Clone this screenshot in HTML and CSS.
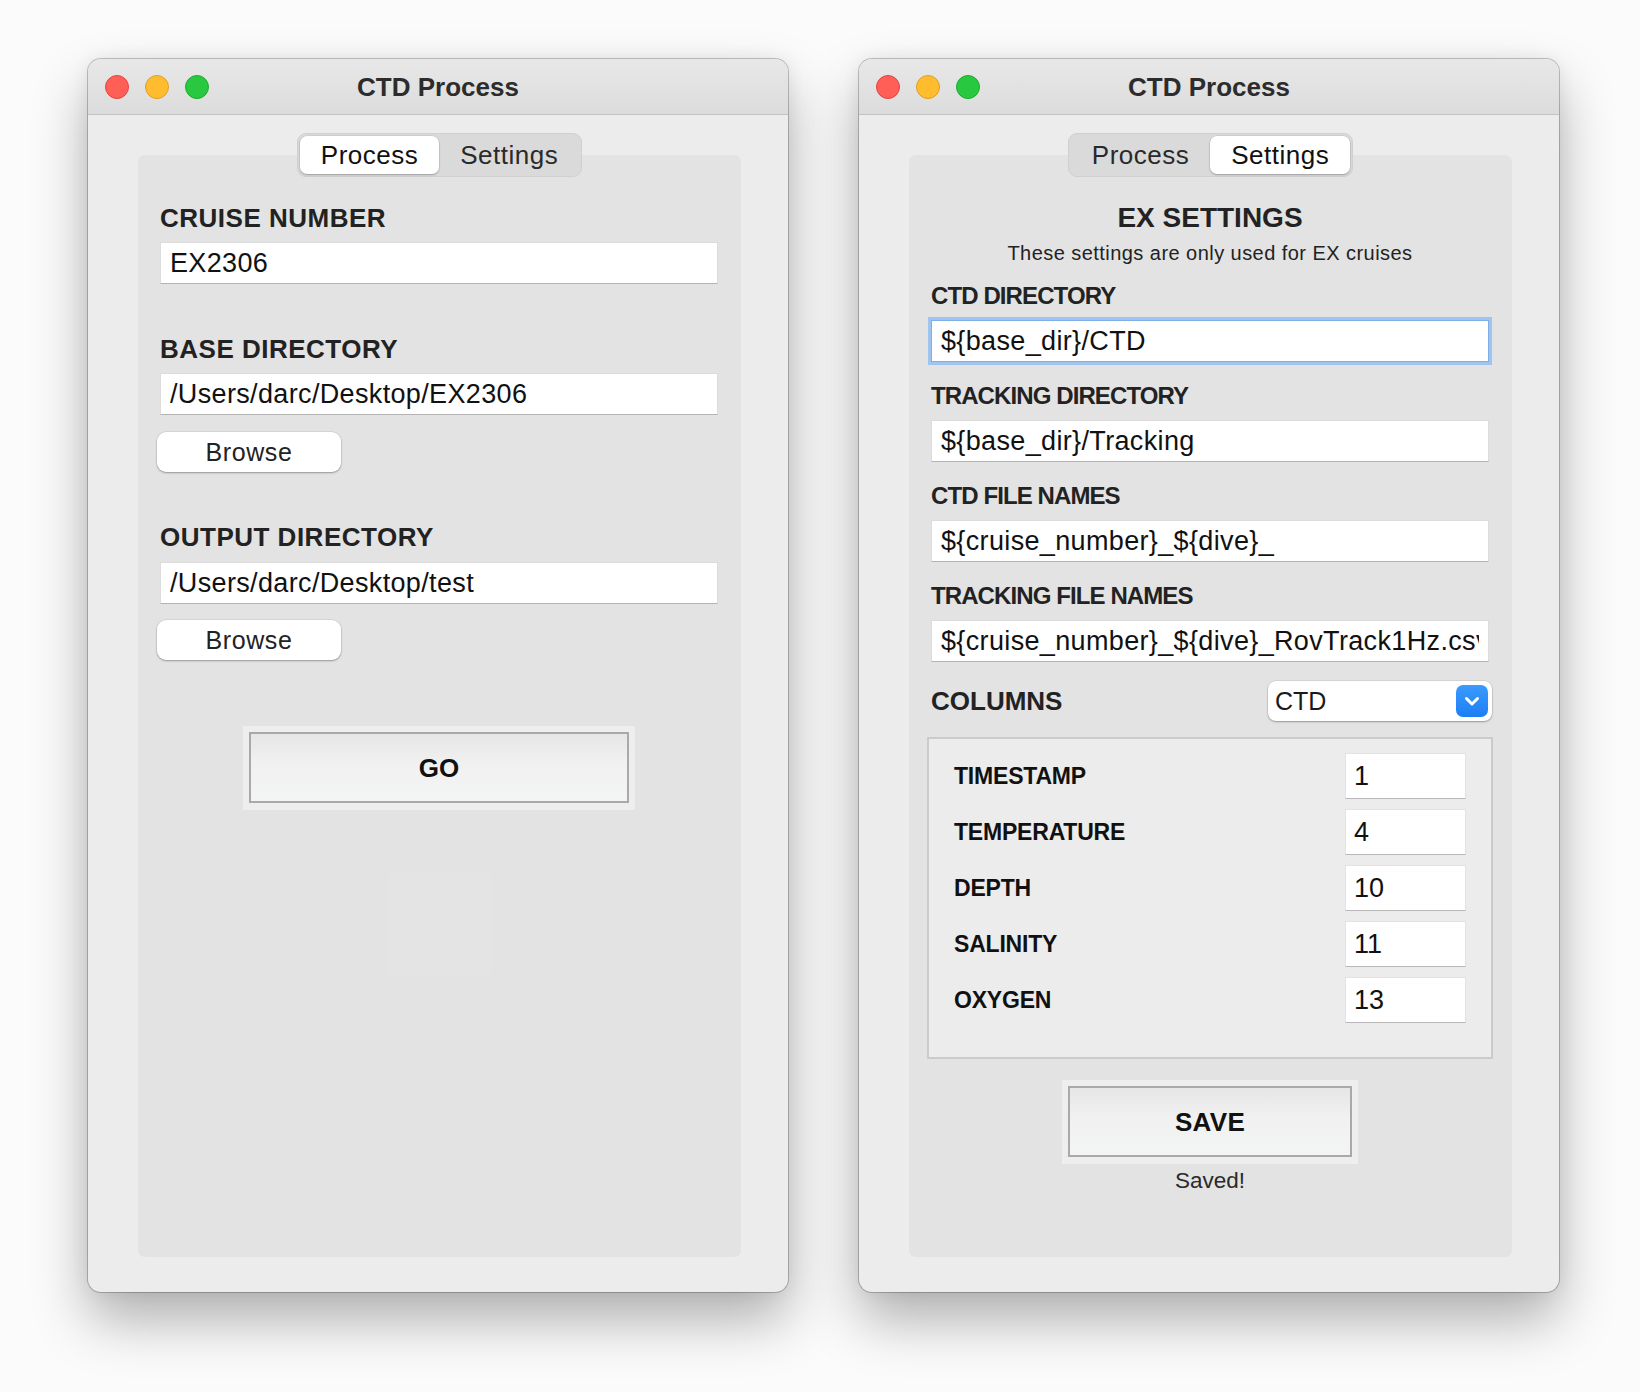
FILE: index.html
```html
<!DOCTYPE html>
<html>
<head>
<meta charset="utf-8">
<title>CTD Process</title>
<link rel="stylesheet" href="styles.css">
</head>
<body>
<div class="desktop">
  <div class="window">
    <div class="titlebar">
      <div class="lights">
        <span class="light red"></span>
        <span class="light yellow"></span>
        <span class="light green"></span>
      </div>
      <div class="title">CTD Process</div>
      <div></div>
    </div>
    <div class="win-body">
      <div class="segmented">
        <div class="seg active">Process</div>
        <div class="seg">Settings</div>
      </div>
      <div class="panel panel-process">
        <div class="label-lg">CRUISE NUMBER</div>
        <input class="field field-lg" type="text" value="EX2306">
        <div class="label-lg gap-top">BASE DIRECTORY</div>
        <input class="field field-lg" type="text" value="/Users/darc/Desktop/EX2306">
        <button class="browse">Browse</button>
        <div class="label-lg gap-top">OUTPUT DIRECTORY</div>
        <input class="field field-lg field-3" type="text" value="/Users/darc/Desktop/test">
        <button class="browse browse-2">Browse</button>
        <div class="action-frame go-frame"><div class="action-btn go-btn">GO</div></div>
        <div class="ghost"></div>
      </div>
    </div>
  </div>

  <div class="window">
    <div class="titlebar">
      <div class="lights">
        <span class="light red"></span>
        <span class="light yellow"></span>
        <span class="light green"></span>
      </div>
      <div class="title">CTD Process</div>
      <div></div>
    </div>
    <div class="win-body">
      <div class="segmented">
        <div class="seg">Process</div>
        <div class="seg active">Settings</div>
      </div>
      <div class="panel panel-settings">
        <div class="heading">EX SETTINGS</div>
        <div class="subtitle">These settings are only used for EX cruises</div>
        <div class="label-sm first">CTD DIRECTORY</div>
        <input class="field focused" type="text" value="${base_dir}/CTD">
        <div class="label-sm">TRACKING DIRECTORY</div>
        <input class="field" type="text" value="${base_dir}/Tracking">
        <div class="label-sm">CTD FILE NAMES</div>
        <input class="field" type="text" value="${cruise_number}_${dive}_">
        <div class="label-sm">TRACKING FILE NAMES</div>
        <input class="field" type="text" value="${cruise_number}_${dive}_RovTrack1Hz.csv">
        <div class="columns-row">
          <div class="columns-label">COLUMNS</div>
          <div class="select">
            <span class="select-text">CTD</span>
            <span class="select-btn">
              <svg width="32" height="32" viewBox="0 0 32 32"><path d="M10.5 13.5 L16 19 L21.5 13.5" fill="none" stroke="#fff" stroke-width="3" stroke-linecap="round" stroke-linejoin="round"/></svg>
            </span>
          </div>
        </div>
        <div class="col-box">
          <div class="col-row"><span class="col-label">TIMESTAMP</span><input class="col-input" type="text" value="1"></div>
          <div class="col-row"><span class="col-label">TEMPERATURE</span><input class="col-input" type="text" value="4"></div>
          <div class="col-row"><span class="col-label">DEPTH</span><input class="col-input" type="text" value="10"></div>
          <div class="col-row"><span class="col-label">SALINITY</span><input class="col-input" type="text" value="11"></div>
          <div class="col-row"><span class="col-label">OXYGEN</span><input class="col-input" type="text" value="13"></div>
        </div>
        <div class="action-frame save-frame"><div class="action-btn save-btn">SAVE</div></div>
        <div class="saved">Saved!</div>
      </div>
    </div>
  </div>
</div>
</body>
</html>
```

FILE: styles.css
```css
* { box-sizing: border-box; }

html, body {
  margin: 0;
  padding: 0;
  background: #fbfbfb;
  font-family: "Liberation Sans", Arial, sans-serif;
  color: #222;
}

.desktop {
  display: flex;
  gap: 71px;
  padding: 59px 0 0 88px;
  height: 1392px;
}

.window {
  width: 700px;
  height: 1233px;
  background: #ececec;
  border-radius: 13px;
  display: flex;
  flex-direction: column;
  overflow: hidden;
  box-shadow: 0 0 0 1px rgba(0, 0, 0, 0.22),
              0 28px 55px rgba(0, 0, 0, 0.30),
              0 0 18px rgba(0, 0, 0, 0.07);
}

.titlebar {
  height: 56px;
  flex: none;
  display: grid;
  grid-template-columns: 1fr auto 1fr;
  align-items: center;
  background: linear-gradient(#e8e8e8, #dcdcdc);
  border-bottom: 1px solid #c3c3c3;
}

.lights {
  display: flex;
  gap: 16px;
  padding-left: 17px;
}

.light {
  width: 24px;
  height: 24px;
  border-radius: 50%;
  display: block;
}
.light.red { background: #ff5f57; border: 1px solid #e2463f; }
.light.yellow { background: #febc2e; border: 1px solid #dfa023; }
.light.green { background: #28c840; border: 1px solid #1dad2b; }

.title {
  font-weight: bold;
  font-size: 26px;
  color: #2c2c2c;
  line-height: 30px;
}

.win-body {
  flex: 1;
  display: flex;
  flex-direction: column;
  align-items: center;
  padding: 18px 47px 35px 50px;
}

.segmented {
  position: relative;
  z-index: 1;
  display: flex;
  height: 44px;
  padding: 2px;
  background: #dadada;
  border: 1px solid #d0d0d0;
  border-radius: 9px;
}

.seg {
  height: 38px;
  padding: 0 21px;
  font-size: 26px;
  letter-spacing: 0.5px;
  line-height: 38px;
  color: #2a2a2a;
  border-radius: 7px;
}

.seg.active {
  background: #fff;
  color: #111;
  box-shadow: 0 1px 2px rgba(0, 0, 0, 0.25), 0 0 0 0.5px rgba(0, 0, 0, 0.08);
}

.panel {
  align-self: stretch;
  flex: 1;
  margin-top: -22px;
  background: #e3e3e3;
  border-radius: 7px;
  display: flex;
  flex-direction: column;
  padding-left: 22px;
  padding-right: 23px;
}

.panel-process { padding-top: 48px; }
.panel-settings { padding-top: 47px; }

.label-lg {
  font-weight: bold;
  font-size: 26px;
  letter-spacing: 0.5px;
  line-height: 30px;
  color: #222;
}

.label-lg.gap-top { margin-top: 50px; }

.field {
  display: block;
  width: 100%;
  height: 42px;
  margin: 10px 0 0 0;
  padding: 0 9px;
  border: 1px solid #dcdcdc;
  border-bottom-color: #b4b4b4;
  border-radius: 0;
  background: #fff;
  font-family: "Liberation Sans", Arial, sans-serif;
  font-size: 27px;
  letter-spacing: 0.35px;
  color: #111;
  outline: none;
}

.field-lg { margin-top: 9px; }
.field-3 { margin-top: 10px; }

.field.focused {
  border-color: #7eaee6;
  box-shadow: 0 0 0 3px #9fc4ef;
}

.browse {
  align-self: flex-start;
  width: 184px;
  height: 40px;
  margin: 17px 0 0 -3px;
  background: #fff;
  border: none;
  border-radius: 9px;
  box-shadow: 0 1px 2px rgba(0, 0, 0, 0.3), 0 0 0 0.5px rgba(0, 0, 0, 0.1);
  font-family: "Liberation Sans", Arial, sans-serif;
  font-size: 25px;
  letter-spacing: 0.6px;
  color: #222;
  padding: 0;
}

.browse-2 { margin-top: 16px; }

.action-frame {
  align-self: center;
  padding: 6px 6px 7px 6px;
  background: #eeeeee;
}

.go-frame { margin-top: 66px; }

.action-btn {
  display: flex;
  align-items: center;
  justify-content: center;
  padding-top: 2px;
  border: 2px solid #a9a9a9;
  background: linear-gradient(#e6e6e6, #f1f1f1 45%, #f3f4f4);
  font-weight: bold;
  font-size: 26px;
  color: #111;
}

.go-btn { width: 380px; height: 71px; }
.save-btn { width: 284px; height: 71px; letter-spacing: 0.3px; }

.ghost {
  align-self: center;
  width: 100px;
  height: 100px;
  margin-top: 65px;
  background: #e4e4e4;
  box-shadow: 0 0 5px 1px rgba(232, 232, 232, 0.5);
  border-radius: 3px;
}

/* settings */
.heading {
  align-self: center;
  font-weight: bold;
  font-size: 28px;
  line-height: 32px;
  color: #222;
}

.subtitle {
  align-self: center;
  margin-top: 7px;
  font-size: 20px;
  letter-spacing: 0.45px;
  line-height: 24px;
  color: #222;
}

.label-sm {
  margin-top: 20px;
  font-weight: bold;
  font-size: 24px;
  letter-spacing: -0.9px;
  line-height: 28px;
  color: #222;
}

.label-sm.first { margin-top: 17px; }

.columns-row {
  margin-top: 19px;
  margin-right: -3px;
  height: 40px;
  display: flex;
  align-items: center;
  justify-content: space-between;
}

.columns-label {
  font-weight: bold;
  font-size: 26px;
  color: #222;
}

.select {
  width: 224px;
  height: 40px;
  background: #fff;
  border-radius: 8px;
  box-shadow: 0 1px 2px rgba(0, 0, 0, 0.3), 0 0 0 0.5px rgba(0, 0, 0, 0.1);
  display: flex;
  align-items: center;
  justify-content: space-between;
  padding: 0 4px 0 7px;
}

.select-text {
  font-size: 25px;
  color: #1a1a1a;
}

.select-btn {
  width: 32px;
  height: 32px;
  border-radius: 7px;
  background: linear-gradient(#3c9bff, #1b7ef6);
  display: flex;
}

.col-box {
  margin: 16px -4px 0 -4px;
  border: 2px solid #cbcbcb;
  background: #ececec;
  padding: 14px 25px 34px 25px;
  display: flex;
  flex-direction: column;
  gap: 10px;
}

.col-row {
  display: flex;
  align-items: center;
  justify-content: space-between;
  height: 46px;
}

.col-label {
  font-weight: bold;
  font-size: 23px;
  letter-spacing: -0.2px;
  color: #111;
}

.col-input {
  width: 121px;
  height: 46px;
  border: 1px solid #e2e2e2;
  border-bottom-color: #b8b8b8;
  background: #fff;
  padding: 0 8px;
  font-family: "Liberation Sans", Arial, sans-serif;
  font-size: 27px;
  color: #111;
  outline: none;
}

.save-frame { margin-top: 21px; }

.saved {
  align-self: center;
  margin-top: 4px;
  font-size: 22.5px;
  line-height: 26px;
  color: #2a2a2a;
}
```
